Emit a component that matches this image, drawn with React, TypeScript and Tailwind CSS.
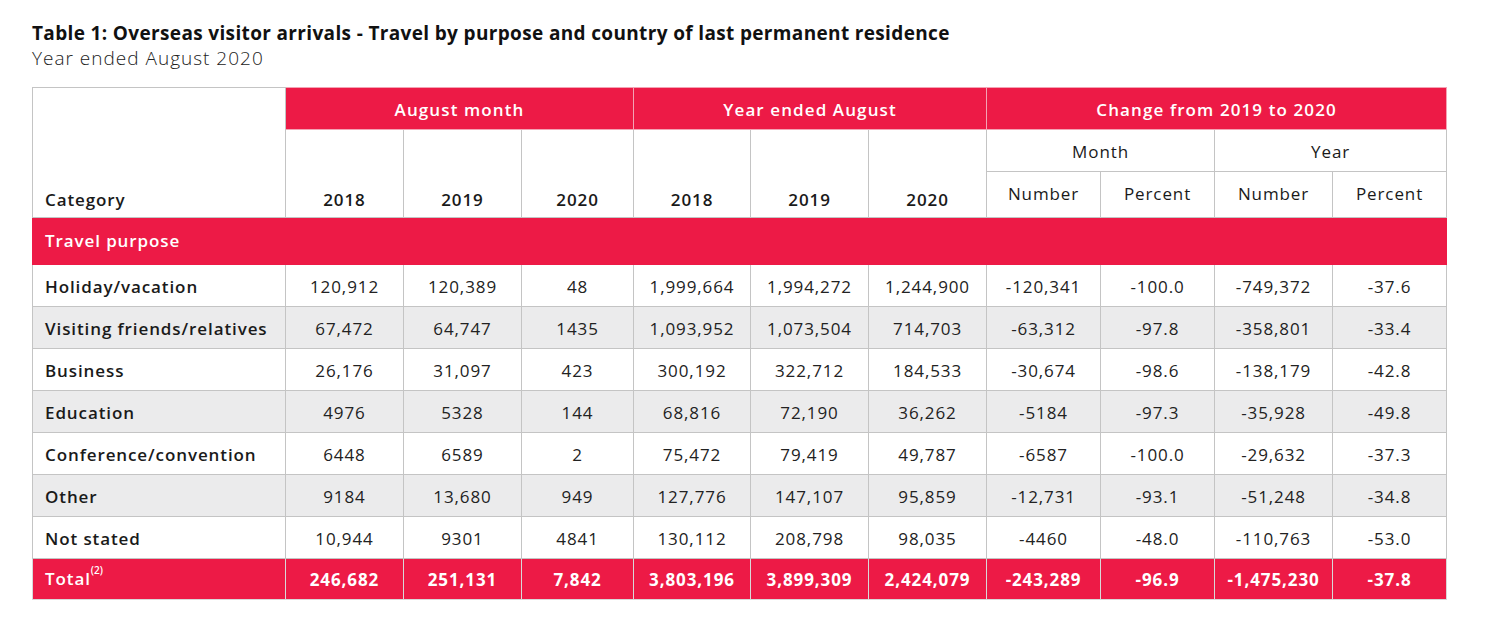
import React from "react";

const rows: [string, string[]][] = [
  ["Holiday/vacation", ["120,912", "120,389", "48", "1,999,664", "1,994,272", "1,244,900", "-120,341", "-100.0", "-749,372", "-37.6"]],
  ["Visiting friends/relatives", ["67,472", "64,747", "1435", "1,093,952", "1,073,504", "714,703", "-63,312", "-97.8", "-358,801", "-33.4"]],
  ["Business", ["26,176", "31,097", "423", "300,192", "322,712", "184,533", "-30,674", "-98.6", "-138,179", "-42.8"]],
  ["Education", ["4976", "5328", "144", "68,816", "72,190", "36,262", "-5184", "-97.3", "-35,928", "-49.8"]],
  ["Conference/convention", ["6448", "6589", "2", "75,472", "79,419", "49,787", "-6587", "-100.0", "-29,632", "-37.3"]],
  ["Other", ["9184", "13,680", "949", "127,776", "147,107", "95,859", "-12,731", "-93.1", "-51,248", "-34.8"]],
  ["Not stated", ["10,944", "9301", "4841", "130,112", "208,798", "98,035", "-4460", "-48.0", "-110,763", "-53.0"]],
];
const total = ["246,682", "251,131", "7,842", "3,803,196", "3,899,309", "2,424,079", "-243,289", "-96.9", "-1,475,230", "-37.8"];
const widths = [253, 118, 118, 112, 117, 118, 118, 114, 114, 118, 114];

export default function App() {
  return (
    <div
      className="w-[1486px] h-[634px] bg-white pl-[32px] pt-[21px] text-[#1a1a1a]"
      style={{ fontFamily: "'Open Sans', 'Noto Sans', sans-serif" }}
    >
      <div className="text-[19px] font-bold leading-[25px] text-[#111] tracking-[0.35px]">
        Table 1: Overseas visitor arrivals - Travel by purpose and country of last permanent residence
      </div>
      <div className="text-[19px] font-light leading-[24px] text-[#222] tracking-[1px]">Year ended August 2020</div>
      <table className="mt-[17px] border-collapse table-fixed w-[1414px] text-[17px] tracking-[0.9px]">
        <colgroup>
          {widths.map((w, i) => (
            <col key={i} style={{ width: w }} />
          ))}
        </colgroup>
        <thead>
          <tr className="h-[42px]">
            <th rowSpan={3} className="border border-[#c4c4c4] align-bottom text-left pl-[12px] pb-[5px] font-semibold">
              Category
            </th>
            <th colSpan={3} className="bg-[#ed1a46] text-white font-semibold border border-[#f3a3b4] tracking-[1.1px] pt-[2px]">August month</th>
            <th colSpan={3} className="bg-[#ed1a46] text-white font-semibold border border-[#f3a3b4] tracking-[1.1px] pt-[2px]">Year ended August</th>
            <th colSpan={4} className="bg-[#ed1a46] text-white font-semibold border border-[#f3a3b4] tracking-[1.1px] pt-[2px]">Change from 2019 to 2020</th>
          </tr>
          <tr className="h-[42px]">
            {["2018", "2019", "2020", "2018", "2019", "2020"].map((y, i) => (
              <th key={i} rowSpan={2} className="border border-[#c4c4c4] align-bottom pb-[5px] font-semibold">
                {y}
              </th>
            ))}
            <th colSpan={2} className="border border-[#c4c4c4] font-normal pt-[2px]">Month</th>
            <th colSpan={2} className="border border-[#c4c4c4] font-normal pt-[2px]">Year</th>
          </tr>
          <tr className="h-[46px]">
            {["Number", "Percent", "Number", "Percent"].map((t, i) => (
              <th key={i} className="border border-[#c4c4c4] font-normal pb-[2px]">
                {t}
              </th>
            ))}
          </tr>
        </thead>
        <tbody>
          <tr className="h-[47px] bg-[#ed1a46] text-white">
            <td colSpan={11} className="pl-[12px] font-semibold border border-[#ed1a46]">
              Travel purpose
            </td>
          </tr>
          {rows.map(([name, vals], r) => (
            <tr key={name} className={`h-[42px] ${r % 2 === 1 ? "bg-[#ebebec]" : "bg-white"}`}>
              <td className="border border-[#c4c4c4] pl-[12px] pt-[2px] font-semibold">{name}</td>
              {vals.map((v, i) => (
                <td key={i} className="border border-[#c4c4c4] pt-[3px] text-center font-normal text-[#222]">
                  {v}
                </td>
              ))}
            </tr>
          ))}
          <tr className="h-[41px] bg-[#ed1a46] text-white">
            <td className="border border-[#d8d8d8] pl-[12px] font-semibold">
              Total<sup className="text-[10px] align-super tracking-normal">(2)</sup>
            </td>
            {total.map((v, i) => (
              <td key={i} className="border border-[#d8d8d8] pt-[1px] text-center font-bold">
                {v}
              </td>
            ))}
          </tr>
        </tbody>
      </table>
    </div>
  );
}
